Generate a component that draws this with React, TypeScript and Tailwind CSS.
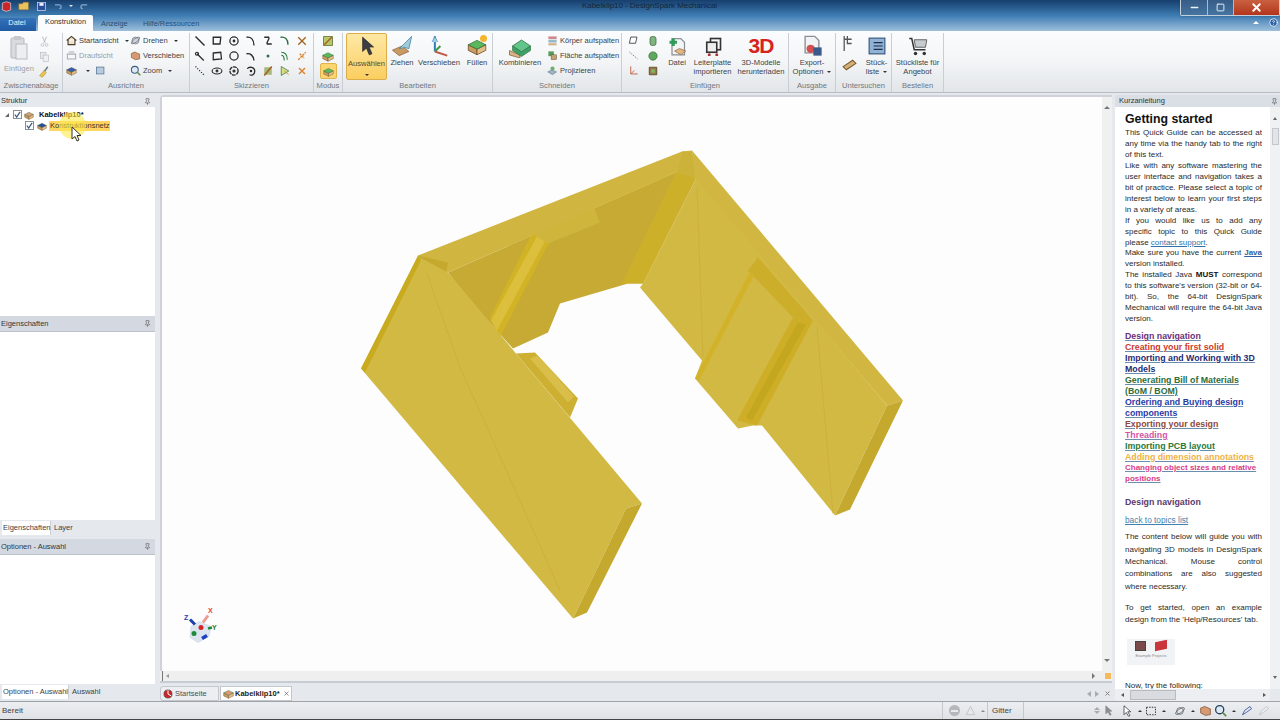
import React from "react";
import { Pin, X, Minus, Square, HelpCircle } from "lucide-react";

const Ico: React.FC<{ s?: number; h?: number; vb?: string; children: React.ReactNode }> = ({ s = 14, h, vb = "0 0 16 16", children }) => (
  <svg width={s} height={h ?? s} viewBox={vb} className="shrink-0" fill="none">
    {children}
  </svg>
);

const Caret = () => <span className="inline-block w-0 h-0 border-x-[2px] border-x-transparent border-t-[2px] border-t-[#333] ml-1 align-middle" />;

// tan box with a coloured lid, shows up a lot in the ribbon
const Box: React.FC<{ s?: number; lid?: string }> = ({ s = 14, lid = "#5cb85c" }) => (
  <Ico s={s}>
    <path d="M1 7l7 3.5V15L1 11.5z" fill="#c99a62" stroke="#6b4a25" strokeWidth=".6" />
    <path d="M15 7l-7 3.5V15l7-3.5z" fill="#e3bd85" stroke="#6b4a25" strokeWidth=".6" />
    <path d="M8 3.5L15 7l-7 3.5L1 7z" fill={lid} stroke="#2d6b32" strokeWidth=".6" />
  </Ico>
);

const K = "#2b2b2b";
const sketchIcons: React.ReactNode[] = [
  <path d="M2 2l12 12" stroke={K} strokeWidth="1.8" />,
  <path d="M3 3h10l-1 9H3z" stroke={K} strokeWidth="1.8" />,
  <g stroke={K} strokeWidth="1.7"><circle cx="8" cy="8" r="5.5" /><circle cx="8" cy="8" r="1" /></g>,
  <path d="M2 3c6-1 10 3 10 11" stroke={K} strokeWidth="1.8" />,
  <path d="M3 3h6c2 3-4 6-2 9h6" stroke={K} strokeWidth="1.8" />,
  <path d="M2 3c6-1 10 2 10 10" stroke="#2f6b3a" strokeWidth="1.8" />,
  <path d="M3 3l10 10M13 3L3 13" stroke="#a5621c" strokeWidth="1.8" />,
  <g stroke={K} strokeWidth="1.6"><path d="M4 5l9 9" /><circle cx="4" cy="5" r="2" /></g>,
  <path d="M3 4l10-1 1 9-11 1z" stroke={K} strokeWidth="1.7" />,
  <circle cx="8" cy="8" r="5.5" stroke={K} strokeWidth="1.7" />,
  <path d="M2 5c5-1 9 2 10 9" stroke={K} strokeWidth="1.8" />,
  <circle cx="8" cy="8" r="2" fill="#3a6b4a" />,
  <path d="M3 3c5 0 8 3 8 10M3 7c3 0 4 2 4 7" stroke="#2f7a40" strokeWidth="1.5" />,
  <path d="M3 13l10-10M5 5l6 6" stroke="#d9822b" strokeWidth="1.8" strokeDasharray="3 1" />,
  <path d="M2 2l12 12" stroke={K} strokeWidth="1.6" strokeDasharray="1.5 2" />,
  <g stroke={K} strokeWidth="1.5"><ellipse cx="8" cy="8" rx="6.5" ry="4" /><circle cx="8" cy="8" r="1.2" /></g>,
  <g stroke={K} strokeWidth="1.8"><circle cx="8" cy="8" r="5.5" strokeDasharray="5 1" /><circle cx="8" cy="8" r="1.2" /></g>,
  <g stroke={K} strokeWidth="1.7"><path d="M3 5c2-3 10-3 10 3s-5 6-7 5" /><circle cx="8" cy="8" r=".8" /></g>,
  <g><path d="M3 3h10v10H3z" fill="#8aa04a" opacity=".7" /><path d="M3 14L13 2" stroke="#a5621c" strokeWidth="2" /></g>,
  <g><path d="M3 2l10 6-10 6z" fill="#d5df8b" stroke="#3f7a3a" /><path d="M7 8l6 5" stroke="#c68a2b" /></g>,
  <path d="M4 4l8 8M12 4l-8 8" stroke="#d9822b" strokeWidth="1.8" />,
];

const GroupLabel: React.FC<{ children: React.ReactNode }> = ({ children }) => (
  <div className="h-[11px] text-center text-[7.6px] leading-[11px] text-[#71777e]">{children}</div>
);

const Group: React.FC<{ w: string; label: string; children: React.ReactNode }> = ({ w, label, children }) => (
  <div className={`${w} shrink-0 h-full flex flex-col border-r border-[#c9ced4] pb-[1px]`}>
    <div className="flex-1 min-h-0 flex">{children}</div>
    <GroupLabel>{label}</GroupLabel>
  </div>
);

const BigBtn: React.FC<{ w: string; icon: React.ReactNode; children: React.ReactNode }> = ({ w, icon, children }) => (
  <div className={`${w} shrink-0 flex flex-col items-center pt-[2px] text-center text-[7.6px] leading-[9px] text-[#3c4248]`}>
    <div className="h-[21px] flex items-center justify-center">{icon}</div>
    <div className="mt-[2px] whitespace-nowrap">{children}</div>
  </div>
);

const SmallRow: React.FC<{ icon: React.ReactNode; children?: React.ReactNode; grey?: boolean }> = ({ icon, children, grey }) => (
  <div className={`h-[15px] flex items-center gap-[2px] whitespace-nowrap text-[7.5px] ${grey ? "text-[#9a9ea3]" : "text-[#3c4248]"}`}>
    {icon}
    {children}
  </div>
);

const Ribbon = () => (
  <div className="h-[62px] flex bg-gradient-to-b from-[#fbfcfd] via-[#f3f5f7] to-[#e2e5e9] pt-[2px] border-b border-[#b8bdc4]">
    <Group w="w-[63px]" label="Zwischenablage">
      <div className="w-[38px] flex flex-col items-center pt-[2px] text-[7.6px] text-[#9ea2a6]">
        <Ico s={20} h={26} vb="0 0 20 26">
          <rect x="2" y="3" width="13" height="20" rx="1" fill="#d9dbde" stroke="#b5b8bc" />
          <rect x="7" y="9" width="11" height="15" fill="#eceef0" stroke="#b8bbbf" />
          <rect x="5" y="1" width="7" height="4" fill="#c5c8cc" />
        </Ico>
        <span className="mt-[2px]">Einfügen</span>
      </div>
      <div className="flex flex-col items-center pt-[1px]">
        <SmallRow icon={<Ico s={11}><path d="M5 1l4 9M11 1L7 10" stroke="#b3b6ba" strokeWidth="1.3" /><circle cx="5" cy="13" r="2" stroke="#b3b6ba" /><circle cx="11" cy="13" r="2" stroke="#b3b6ba" /></Ico>} />
        <SmallRow icon={<Ico s={11}><rect x="2" y="2" width="8" height="9" fill="#e6e8ea" stroke="#bcbfc3" /><rect x="6" y="6" width="8" height="9" fill="#eef0f1" stroke="#bcbfc3" /></Ico>} />
        <SmallRow icon={<Ico s={12}><path d="M13 1L8 8" stroke="#6d7a85" strokeWidth="2" /><path d="M8 6l3 3-5 6-4-2z" fill="#e9c64a" stroke="#9a7f22" strokeWidth=".6" /></Ico>} />
      </div>
    </Group>
    <Group w="w-[127px]" label="Ausrichten">
      <div className="w-[67px] pl-[3px]">
        <SmallRow icon={<Ico s={11}><path d="M1 8l7-6 7 6M3 7v7h10V7" stroke="#4a3a28" strokeWidth="1.6" fill="#efe5d0" /></Ico>}>
          <span className="text-[#34393f]">Startansicht</span><Caret />
        </SmallRow>
        <SmallRow grey icon={<Ico s={11}><path d="M2 13V6h12v7zM4 3h8" stroke="#a9adb2" strokeWidth="1.5" /></Ico>}>Draufsicht</SmallRow>
        <SmallRow icon={<span className="flex items-center gap-[5px]"><Box s={11} lid="#3f55b0" /><Caret /><Ico s={11}><rect x="2" y="3" width="11" height="10" fill="#b9cbe0" stroke="#4e6d8c" /></Ico></span>} />
      </div>
      <div>
        <SmallRow icon={<Ico s={11}><ellipse cx="8" cy="8" rx="5" ry="5" fill="#cfd4d8" stroke="#6a7177" /><ellipse cx="8" cy="8" rx="7.5" ry="2.5" stroke="#6a7177" transform="rotate(-35 8 8)" /></Ico>}>
          <span>Drehen</span><Caret />
        </SmallRow>
        <SmallRow icon={<Ico s={11}><path d="M2 5l5-2 7 3v7l-6 1-6-3z" fill="#d69a72" stroke="#8a5a3c" /></Ico>}>Verschieben</SmallRow>
        <SmallRow icon={<Ico s={11}><circle cx="7" cy="7" r="5" fill="#dce9f5" stroke="#3c5f7e" strokeWidth="1.5" /><path d="M11 11l4 4" stroke="#5a8a3a" strokeWidth="2" /></Ico>}>
          <span>Zoom</span><Caret />
        </SmallRow>
      </div>
    </Group>
    <Group w="w-[124px]" label="Skizzieren">
      <div className="pl-[1px] grid grid-cols-[repeat(7,17px)] grid-rows-[repeat(3,15px)] place-items-center">
        {sketchIcons.map((ic, i) => (
          <Ico key={i} s={12}>{ic}</Ico>
        ))}
      </div>
    </Group>
    <Group w="w-[29px]" label="Modus">
      <div className="w-full flex flex-col items-center">
        <div className="h-[15px] flex items-center"><Ico s={12}><path d="M2 2h12v12H2z" fill="#b8c76a" stroke="#5a6a2a" /><path d="M3 13L13 3" stroke="#a5621c" strokeWidth="2" /></Ico></div>
        <div className="h-[15px] flex items-center"><Box s={12} /></div>
        <div className="h-[16px] w-[17px] flex items-center justify-center rounded-[2px] bg-[#fcd56e] border border-[#e0b44c]"><Box s={11} /></div>
      </div>
    </Group>
    <Group w="w-[150px]" label="Bearbeiten">
      <div className="ml-[3px] w-[41px] h-[47px] shrink-0 flex flex-col items-center rounded-[2px] border border-[#dcae4a] bg-gradient-to-b from-[#fde8a4] to-[#fbce5e] text-[7.6px] text-[#5a4a28] pt-[2px]">
        <Ico s={18} h={20} vb="0 0 16 18"><path d="M4 1v13l3.5-3 2.5 6 2.5-1-2.5-6H14z" fill="#3c3c44" stroke="#222" strokeWidth=".5" /></Ico>
        <span className="mt-[2px]">Auswählen</span>
        <span className="mt-[5px] w-0 h-0 border-x-[2px] border-x-transparent border-t-[2px] border-t-[#333]" />
      </div>
      <BigBtn w="w-[30px]" icon={<Ico s={22}><path d="M1 11l7-3 5 4-7 3z" fill="#c99a62" stroke="#8a5a3c" strokeWidth=".5" /><path d="M6 10L15 1l-2 9-3-1z" fill="#9ecbd9" stroke="#4e8aa0" strokeWidth=".6" /></Ico>}>Ziehen</BigBtn>
      <BigBtn w="w-[44px]" icon={<Ico s={22}><path d="M5 1v11" stroke="#3a7fb8" strokeWidth="1.5" /><path d="M3 5l2-4 2 4" fill="#9ed0e8" stroke="#3a7fb8" strokeWidth=".5" /><path d="M5 12l4-4" stroke="#3f9a4a" strokeWidth="1.5" /><path d="M5 12l9 3" stroke="#c25a4a" strokeWidth="1.5" /></Ico>}>Verschieben</BigBtn>
      <BigBtn w="w-[32px]" icon={<span className="flex items-center"><Box s={20} /><span className="-ml-[7px] -mt-[14px] w-[7px] h-[7px] rounded-full bg-[#f5b52e]" /></span>}>Füllen</BigBtn>
    </Group>
    <Group w="w-[129px]" label="Schneiden">
      <BigBtn w="w-[54px]" icon={<Ico s={24}><path d="M1 11l7 3v2l-7-2z" fill="#d9b184" stroke="#6b4a25" strokeWidth=".4" /><path d="M3 8l6-4 6 4-6 4z" fill="#62c68a" stroke="#2d6b42" strokeWidth=".5" /><path d="M3 8v3l6 4 6-4V8l-6 4z" fill="#3fa265" stroke="#2d6b42" strokeWidth=".4" /></Ico>}>Kombinieren</BigBtn>
      <div>
        <SmallRow icon={<Ico s={11}><rect x="2" y="2" width="12" height="4" fill="#cf8b8b" /><rect x="2" y="7" width="12" height="4" fill="#9ab8c8" /><rect x="2" y="12" width="12" height="3" fill="#d4b184" /></Ico>}>Körper aufspalten</SmallRow>
        <SmallRow icon={<Ico s={11}><rect x="2" y="2" width="8" height="7" fill="#5a9a5a" /><rect x="6" y="7" width="8" height="7" fill="#c9a06a" stroke="#444" strokeWidth=".6" /></Ico>}>Fläche aufspalten</SmallRow>
        <SmallRow icon={<Ico s={11}><path d="M1 10l6-3 7 3-6 4z" fill="#9db4c8" stroke="#4a5a6a" strokeWidth=".6" /><circle cx="8" cy="5" r="3" fill="#6fae6f" /></Ico>}>Projizieren</SmallRow>
      </div>
    </Group>
    <Group w="w-[167px]" label="Einfügen">
      <div className="w-[21px] pl-[6px]">
        <SmallRow icon={<Ico s={11}><path d="M4 3h9l-2 9H2z" fill="#fff" stroke="#333" strokeWidth="1.2" /></Ico>} />
        <SmallRow icon={<Ico s={11}><path d="M2 3l12 10" stroke="#555" strokeDasharray="2 1.5" /></Ico>} />
        <SmallRow icon={<Ico s={11}><path d="M4 2v11h10M4 13l5-5" stroke="#c25a3a" strokeWidth="1.3" /></Ico>} />
      </div>
      <div className="w-[22px] pl-[4px]">
        <SmallRow icon={<Ico s={12}><rect x="4" y="2" width="8" height="12" rx="3" fill="#7fb37f" stroke="#3a6a3a" /></Ico>} />
        <SmallRow icon={<Ico s={12}><circle cx="8" cy="8" r="5.5" fill="#5da85d" stroke="#3a6a3a" /></Ico>} />
        <SmallRow icon={<Ico s={12}><path d="M3 3h10v10H3z" fill="#9a7a4a" stroke="#4a3a1a" /><circle cx="8" cy="8" r="2.5" fill="#7abf5a" /></Ico>} />
      </div>
      <BigBtn w="w-[24px]" icon={<Ico s={20}><path d="M4 2h7l3 3v10H4z" fill="#f3f4f5" stroke="#8c9094" /><path d="M2 5h6M5 2v6" stroke="#2f9a5a" strokeWidth="2.4" /><path d="M6 12l4-2 5 2-4 3z" fill="#e0b880" stroke="#8a5a3c" strokeWidth=".5" /></Ico>}>Datei</BigBtn>
      <BigBtn w="w-[47px]" icon={<Ico s={20}><rect x="6" y="2" width="8" height="9" stroke="#333" strokeWidth="1.3" /><rect x="3" y="5" width="8" height="8" fill="#eee" stroke="#333" strokeWidth="1.3" /><circle cx="5" cy="15" r="1.2" fill="#a33" /><circle cx="11" cy="15" r="1.2" fill="#a33" /></Ico>}>Leiterplatte<br />importieren</BigBtn>
      <BigBtn w="w-[50px]" icon={<span className="text-[21px] leading-none font-black tracking-[-1px] text-[#d8231c]">3D</span>}>3D-Modelle<br />herunterladen</BigBtn>
    </Group>
    <Group w="w-[47px]" label="Ausgabe">
      <BigBtn w="w-full" icon={<Ico s={22}><path d="M3 1h7l3 3v9H3z" fill="#f2f3f5" stroke="#8c9094" /><circle cx="7" cy="10" r="3" fill="#d25050" /><rect x="9" y="9" width="6" height="6" fill="#3a5a8a" /></Ico>}>Export-<br />Optionen<Caret /></BigBtn>
    </Group>
    <Group w="w-[56px]" label="Untersuchen">
      <div className="w-[27px] flex flex-col items-center pt-[2px] gap-[4px]">
        <Ico s={17}><path d="M3 1v14M6 1v7h4M3 4h7" stroke="#555" strokeWidth="1.2" /></Ico>
        <Ico s={17}><path d="M2 10l9-6 3 3-9 6z" fill="#d6b07a" stroke="#7a5a2a" /></Ico>
      </div>
      <BigBtn w="w-[27px]" icon={<Ico s={18}><rect x="1" y="1" width="14" height="14" fill="#8fb2d6" stroke="#35567a" /><path d="M5 5h8M5 8h8M5 11h8" stroke="#1c2f44" /></Ico>}>Stück-<br />liste<Caret /></BigBtn>
    </Group>
    <Group w="w-[52px]" label="Bestellen">
      <BigBtn w="w-full" icon={<Ico s={20}><path d="M1 2h2l2 9h9" stroke="#333" strokeWidth="1.2" /><path d="M5 3h10l-1 6H6z" fill="#c8ccd0" stroke="#555" strokeWidth=".7" /><circle cx="6" cy="14" r="1.4" fill="#333" /><circle cx="13" cy="14" r="1.4" fill="#333" /></Ico>}>Stückliste für<br />Angebot</BigBtn>
    </Group>
  </div>
);

const Header = () => (
  <div className="h-[31px] shrink-0 bg-gradient-to-b from-[#173f6d] via-[#3d7cb3] to-[#9dbfdb]">
    <div className="h-[15px] flex items-start">
      <div className="w-[582px] h-[12px] flex items-center gap-[6px] pl-[1px]">
        <Ico s={11}><path d="M2 3l6-2 6 2v10l-6 2-6-2z" fill="#c9252a" stroke="#fff" strokeWidth=".8" /></Ico>
        <Ico s={12}><path d="M1 5h5l1-2h7v10H1z" fill="#e9c25c" stroke="#8a6a22" strokeWidth=".6" /></Ico>
        <Ico s={11}><rect x="2" y="2" width="12" height="12" fill="#2b4f9a" stroke="#dce4f0" /><rect x="5" y="3" width="6" height="4" fill="#eef" /></Ico>
        <Ico s={10}><path d="M3 6h7c4 0 4 6 0 6" stroke="#7ea4d0" strokeWidth="2" /></Ico>
        <span className="w-0 h-0 border-x-[2px] border-x-transparent border-t-[2px] border-t-[#dde8f2]" />
        <Ico s={10}><path d="M13 6H6c-4 0-4 6 0 6" stroke="#88a9c9" strokeWidth="2" /></Ico>
      </div>
      <div className="w-[598px] pt-[1px] text-[7.9px] leading-[10px] text-[#14263c]">Kabelklip10 - DesignSpark Mechanical</div>
      <div className="flex w-[100px] h-[16px] rounded-b-[2px] border border-t-0 border-[#c4d0dc] shadow-sm">
        <div className="w-[27px] flex items-center justify-center bg-[#4d7197]/60 border-r border-[#a9bccd]"><Minus size={11} strokeWidth={3} color="#eef3f7" /></div>
        <div className="w-[26px] flex items-center justify-center bg-[#4d7197]/60 border-r border-[#a9bccd]"><Square size={9} strokeWidth={2.5} color="#eef3f7" /></div>
        <div className="flex-1 flex items-center justify-center bg-gradient-to-b from-[#c9603f] to-[#b3341c]"><X size={13} strokeWidth={3.5} color="#fff" /></div>
      </div>
    </div>
    <div className="h-[16px] flex items-end text-[7.4px]">
      <div className="w-[36px] h-[13px] pr-[2px] bg-gradient-to-b from-[#3572b8] to-[#1f5aa3] text-center leading-[10px] text-[#e8f0f8] rounded-t-[1px]">Datei</div>
      <div className="ml-[2px] w-[55px] h-[16px] rounded-t-[2px] bg-[#fbfcfd] text-center leading-[14px] text-[#2c3238]">Konstruktion</div>
      <div className="w-[50px] h-[13px] pl-[8px] leading-[11px] text-[#255077]">Anzeige</div>
      <div className="w-[1110px] h-[13px] leading-[11px] text-[#255077]">Hilfe/Ressourcen</div>
      <div className="flex-1 h-[13px] flex items-center gap-[10px] pb-[4px]">
        <span className="w-0 h-0 border-x-[3px] border-x-transparent border-b-[3px] border-b-white" />
        <HelpCircle size={9} color="#fff" fill="#2b5fa8" />
      </div>
    </div>
  </div>
);

const PanelHead: React.FC<{ title: string; light?: boolean }> = ({ title, light }) => (
  <div className={`flex items-center justify-between pl-[1px] pr-[4px] text-[7.5px] text-[#2f353b] ${light ? "h-[12px]" : "h-[16px] bg-[#d4d9e1] border-b border-[#bcc2cb]"}`}>
    <span>{title}</span>
    <Pin size={7} color="#555" />
  </div>
);

const Check = () => (
  <span className="w-[9px] h-[9px] shrink-0 border border-[#8a8f96] bg-white flex items-center justify-center">
    <svg width="7" height="7" viewBox="0 0 8 8"><path d="M1 4l2 3 4-6" stroke="#3a5a8a" strokeWidth="1.4" fill="none" /></svg>
  </span>
);

const SubTabs: React.FC<{ a: string; b: string; w: string }> = ({ a, b, w }) => (
  <div className="h-[15px] flex items-center text-[7.5px] text-[#3c4248] pl-[2px]">
    <span className={`${w} h-[14px] bg-white border-r border-[#c9ced4] leading-[14px] px-[1px] whitespace-nowrap`}>{a}</span>
    <span className="pl-[3px]">{b}</span>
  </div>
);

const LeftPanel = () => (
  <div className="relative w-[155px] shrink-0 flex flex-col">
    <PanelHead title="Struktur" light />
    <div className="h-[209px] bg-white pt-[2px] text-[7.5px] text-[#111]">
      <div className="h-[11px] flex items-center pl-[5px]">
        <span className="w-0 h-0 border-l-[4px] border-l-transparent border-b-[4px] border-b-[#666] mr-[4px]" />
        <Check />
        <span className="ml-[2px]"><Box s={10} lid="#d99a7a" /></span>
        <span className="ml-[5px] font-bold">Kabelklip10*</span>
      </div>
      <div className="h-[11px] flex items-center pl-[25px]">
        <Check />
        <span className="ml-[3px]"><Box s={10} lid="#2b4a9a" /></span>
        <span className="ml-[2px] px-[1px] w-[61px] bg-[#ffd662] leading-[10px] text-[#3a3524]">Konstruktionsnetz</span>
      </div>
    </div>
    <PanelHead title="Eigenschaften" />
    <div className="h-[188px] bg-white" />
    <SubTabs a="Eigenschaften" b="Layer" w="w-[49px]" />
    <div className="h-[4px]" />
    <PanelHead title="Optionen - Auswahl" />
    <div className="h-[129px] bg-white" />
    <SubTabs a="Optionen - Auswahl" b="Auswahl" w="w-[67px]" />
    {/* yellow highlight of the screen recorder + mouse pointer */}
    <div className="absolute left-[59px] top-[17px] w-[27px] h-[27px] rounded-full bg-[#ffe94a]/60" />
    <svg className="absolute left-[71px] top-[31px]" width="12" height="16" viewBox="0 0 12 16">
      <path d="M1 1v12l3-2.5 2 4.5 2-1-2-4.5h4z" fill="#fff" stroke="#333" />
    </svg>
  </div>
);

const Part = () => (
  <svg className="w-full h-full block" viewBox="162 97 940 573">
    {/* back wall */}
    <polygon points="448,272 680,170 696,178 643,283 628,283 560,303 548,332 513,348 470,300" fill="#c6aa33" />
    <polygon points="627,283 643,283 696,176 676,172 622,283" fill="#cdb02a" />
    <polygon points="532,233 550,240 500,337 490,317" fill="#d2b326" />
    <polygon points="537,236 546,239 497,330 491,320" fill="#dcbf3c" />
    <polygon points="530,232 593,205 600,222 548,243" fill="#d0b53c" />
    {/* top band */}
    <polygon points="418,255 682,151 692,150 696,176 676,172 448,272 420,262" fill="#d0b640" />
    <polygon points="418,255 448,262 446,272 420,262" fill="#c4a92e" />
    <polygon points="682,151 692,151 697,178 677,172" fill="#cdb23a" />
    {/* small tab on left wall */}
    <polygon points="516,353 535,352 578,398 570,417" fill="#cdb032" />
    <polygon points="530,358 538,355 574,396 568,402" fill="#d9bf4a" />
    {/* left wall */}
    <polygon points="418,256 361,368 573,618 626,508 642,503 448,272" fill="#d2b944" />
    <polygon points="418,255 361,368 365,372 421,260" fill="#c9ab1f" />
    <polygon points="642,503 626,508 573,618 587,612" fill="#c4a92e" />
    <path d="M427,273 L460,367 L493,440 L560,590" stroke="#c8ae38" strokeWidth=".7" fill="none" />
    {/* right wall */}
    <polygon points="692,150 903,400 887,405 696,180" fill="#d1b742" />
    <polygon points="696,178 887,405 835,515 762,425 753,425 738,428 695,378 702,360 640,287 643,283" fill="#d2b944" />
    <polygon points="903,400 887,405 835,515 850,509" fill="#c4a92e" />
    <polygon points="758,257 748,270 793,317 813,320" fill="#cdae2a" />
    <polygon points="750,271 695,378 699,380 754,275" fill="#d2b228" />
    <polygon points="793,317 813,320 757,425 737,420" fill="#cdae26" />
    <polygon points="798,322 806,324 752,420 746,417" fill="#c4a61f" />
    <path d="M697,187 L703,357 M817,327 L833,513" stroke="#c8ae38" strokeWidth=".7" fill="none" />
    {/* triad */}
    <g>
      <polygon points="199,621 211,626 209,636 198,642 190,637 191,626" fill="#dbe4ef" stroke="#c3cede" strokeWidth=".5" />
      <circle cx="201" cy="627" r="2.5" fill="#d8232a" />
      <circle cx="194" cy="633" r="2.5" fill="#1f8a3a" />
      <path d="M202,638 L207,635" stroke="#1f3fc0" strokeWidth="3.5" />
      <path d="M203,622 L208,615" stroke="#eb9c94" strokeWidth="3" />
      <path d="M190,619 L195,624" stroke="#1f3fa8" strokeWidth="3" />
      <path d="M208,628 L212,627" stroke="#1f8a3a" strokeWidth="2.5" />
      <text x="208" y="612" fontSize="7" fontWeight="700" fill="#e0443a" fontFamily="Liberation Sans">X</text>
      <text x="184" y="619" fontSize="7" fontWeight="700" fill="#2a3fb0" fontFamily="Liberation Sans">Z</text>
      <text x="212" y="629" fontSize="7" fontWeight="700" fill="#1f7a3a" fontFamily="Liberation Sans">Y</text>
    </g>
  </svg>
);

const Canvas = () => (
  <div className="flex-1 min-w-0 flex flex-col pl-[5px] pr-[3px]">
    <div className="flex-1 min-h-0 flex rounded-tl-[4px] border-l-2 border-t-2 border-[#cfd3d9] bg-white">
      <div className="flex-1 min-w-0 bg-[#fdfdfe]"><Part /></div>
      <div className="w-[10px] bg-[#eff0f0] flex flex-col items-center justify-between py-[9px] text-[#888]">
        <span className="w-0 h-0 border-x-[3px] border-x-transparent border-b-[3px] border-b-[#777]" />
        <span className="w-0 h-0 border-x-[3px] border-x-transparent border-t-[3px] border-t-[#777]" />
      </div>
    </div>
    <div className="h-[12px] flex items-center justify-between bg-[#eeefee] border-b-2 border-[#c7ccd2] pl-[2px] pr-[1px]">
      <span className="flex items-center gap-[3px]">
        <span className="w-[1px] h-[10px] bg-[#777]" />
        <span className="w-0 h-0 border-y-[2px] border-y-transparent border-r-[3px] border-r-[#999]" />
      </span>
      <span className="flex items-center gap-[10px]">
        <span className="w-0 h-0 border-y-[3px] border-y-transparent border-l-[3px] border-l-[#777]" />
        <span className="w-[6px] h-[6px] bg-[#f7b95a]" />
      </span>
    </div>
    <div className="h-[3px]" />
    <div className="h-[15px] flex items-stretch text-[7.5px]">
      <div className="w-[59px] flex items-center gap-[2px] pl-[2px] bg-[#eceef1] border border-[#c3c8cf] rounded-l-[3px] text-[#4a5057]">
        <Ico s={10}><circle cx="8" cy="8" r="6.5" fill="#c9252a" stroke="#444" /><path d="M8 2v6l5 3" stroke="#fff" strokeWidth="1.6" /></Ico>
        Startseite
      </div>
      <div className="ml-[1px] w-[72px] flex items-center gap-[1px] pl-[2px] bg-white border border-[#c3c8cf] text-[#222] font-bold">
        <Box s={11} lid="#d99a7a" />
        <span>Kabelklip10*</span>
        <X size={7} className="ml-[2px]" color="#444" />
      </div>
      <div className="flex-1 flex items-center justify-end gap-[4px] pr-[1px]">
        <span className="w-0 h-0 border-y-[3px] border-y-transparent border-r-[4px] border-r-[#a9adb2]" />
        <span className="w-0 h-0 border-y-[3px] border-y-transparent border-l-[4px] border-l-[#a9adb2]" />
        <X size={7} color="#777" strokeWidth={3} className="ml-[1px]" />
      </div>
    </div>
  </div>
);

const just = "text-justify [text-align-last:justify]";
const intro: [string, boolean][] = [
  ["This Quick Guide can be accessed at", true],
  ["any time via the handy tab to the right", true],
  ["of this text.", false],
  ["Like with any software mastering the", true],
  ["user interface and navigation takes a", true],
  ["bit of practice. Please select a topic of", true],
  ["interest below to learn your first steps", true],
  ["in a variety of areas.", false],
  ["If you would like us to add any", true],
  ["specific topic to this Quick Guide", true],
];

const links: [string, string][] = [
  ["Design navigation", "text-[#6a2f7c]"],
  ["Creating your first solid", "text-[#cc3b2c]"],
  ["Importing and Working with 3D", "text-[#1f2c74]"],
  ["Models", "text-[#1f2c74]"],
  ["Generating Bill of Materials", "text-[#2f6d3a]"],
  ["(BoM / BOM)", "text-[#2f6d3a]"],
  ["Ordering and Buying design", "text-[#2a3ca6]"],
  ["components", "text-[#2a3ca6]"],
  ["Exporting your design", "text-[#8d4a40]"],
  ["Threading", "text-[#d455a5]"],
  ["Importing PCB layout", "text-[#2a7a3a]"],
  ["Adding dimension annotations", "text-[#efb244]"],
  ["Changing object sizes and relative", "text-[#d93b8a] text-[8px]"],
  ["positions", "text-[#d93b8a] text-[8px]"],
];

const Guide = () => (
  <div className="w-[165px] shrink-0 flex flex-col">
    <div className="h-[12px] flex items-center justify-between pl-[4px] pr-[2px] text-[7.5px] text-[#2f353b] bg-[#dadee5]">
      <span>Kurzanleitung</span>
      <Pin size={7} color="#555" />
    </div>
    <div className="flex-1 min-h-0 flex">
      <div className="w-[155px] shrink-0 bg-white pl-[10px] pr-[8px] pt-[4px] overflow-hidden text-[8px] leading-[10.95px] text-[#2a2a2a]">
        <div className="text-[12.3px] leading-[16px] font-bold text-[#111] mb-[1px]">Getting started</div>
        {intro.map(([t, j]) => (
          <div key={t} className={j ? just : ""}>{t}</div>
        ))}
        <div>please <span className="text-[#2f73a8] underline">contact support</span>.</div>
        <div className={just}>Make sure you have the current <span className="text-[#2f5fa8] underline font-bold">Java</span></div>
        <div>version installed.</div>
        <div className={just}>The installed Java <b className="text-[#111]">MUST</b> correspond</div>
        <div className={just}>to this software's version (32-bit or 64-</div>
        <div className={just}>bit). So, the 64-bit DesignSpark</div>
        <div className={just}>Mechanical will require the 64-bit Java</div>
        <div>version.</div>
        <div className="mt-[6px] text-[8.8px] font-bold underline decoration-[#6a8fae] whitespace-nowrap">
          {links.map(([t, c]) => (
            <div key={t} className={c}>{t}</div>
          ))}
        </div>
        <div className="mt-[12px] text-[8.8px] font-bold text-[#5a3a70]">Design navigation</div>
        <div className="mt-[8px] text-[8.3px] text-[#3f82ad] underline">back to topics list</div>
        <div className="mt-[5px] leading-[12.3px]">
          <div className={just}>The content below will guide you with</div>
          <div className={just}>navigating 3D models in DesignSpark</div>
          <div className={just}>Mechanical. Mouse control</div>
          <div className={just}>combinations are also suggested</div>
          <div>where necessary.</div>
        </div>
        <div className="mt-[9px] leading-[12.3px]">
          <div className={just}>To get started, open an example</div>
          <div>design from the 'Help/Resources' tab.</div>
        </div>
        <div className="mt-[13px] ml-[2px] w-[48px] h-[26px] bg-[#f2f3f5] flex flex-col items-center pt-[2px]">
          <div className="flex gap-[9px]">
            <span className="w-[11px] h-[10px] bg-[#7a4a4a] border border-[#444]" />
            <span className="w-[12px] h-[9px] bg-[#c9353a] -skew-y-12" />
          </div>
          <div className="mt-[2px] text-[4px] leading-[5px] text-[#888]">Example Projects</div>
        </div>
        <div className="mt-[16px]">Now, try the following:</div>
      </div>
      <div className="flex-1 flex flex-col items-center bg-[#f0f1f2] py-[10px] justify-between">
        <span className="w-0 h-0 border-x-[2px] border-x-transparent border-b-[3px] border-b-[#666]" />
        <span className="w-[7px] h-[17px] mb-auto mt-[8px] bg-[#e2e4e8] border border-[#c4c7cc]" />
        <span className="w-0 h-0 border-x-[2px] border-x-transparent border-t-[3px] border-t-[#666]" />
      </div>
    </div>
    <div className="h-[12px] flex items-center bg-[#eceef1] w-[155px] pl-[6px] pr-[4px] justify-between">
      <span className="flex items-center gap-[6px]">
        <span className="w-0 h-0 border-y-[2px] border-y-transparent border-r-[3px] border-r-[#555]" />
        <span className="w-[46px] h-[10px] bg-[#d8dbe0] border border-[#bbb]" />
      </span>
      <span className="w-0 h-0 border-y-[2px] border-y-transparent border-l-[3px] border-l-[#555]" />
    </div>
  </div>
);

const UpCaret: React.FC<{ cls: string }> = ({ cls }) => (
  <span className={`${cls} shrink-0 w-0 h-0 border-x-[2px] border-x-transparent border-b-[2px] border-b-[#333]`} />
);

const Status = () => (
  <div className="h-[19px] shrink-0 flex items-center bg-gradient-to-b from-[#eceef1] to-[#dfe2e6] border-t border-[#9ea3aa] border-b border-b-[#444] text-[8px] text-[#3c4248]">
    <span className="pl-[2px] w-[942px]">Bereit</span>
    <div className="w-[45px] h-full flex items-center gap-[5px] pl-[6px] border-l border-[#c4c8ce]">
      <span className="w-[11px] h-[11px] rounded-full bg-[#b4b8bc] flex items-center justify-center"><span className="w-[7px] h-[2px] bg-[#e8eaec]" /></span>
      <Ico s={11}><path d="M8 2l6 12H2z" fill="#e6e8ea" stroke="#b4b8bc" /></Ico>
      <span className="w-0 h-0 border-x-[2px] border-x-transparent border-b-[2px] border-b-[#888]" />
    </div>
    <div className="w-[37px] h-full flex items-center pl-[4px] border-l border-r border-[#c4c8ce]">Gitter</div>
    <div className="flex-1 flex items-center pl-[70px]">
      <span className="flex flex-col gap-[1px] shrink-0">
        <span className="w-0 h-0 border-x-[3px] border-x-transparent border-b-[3px] border-b-[#aaa]" />
        <span className="w-0 h-0 border-x-[3px] border-x-transparent border-t-[3px] border-t-[#aaa]" />
      </span>
      <span className="ml-[3px]"><Ico s={11}><path d="M4 1v12l3-3 3 5 2-1-3-5h4z" fill="#8c9096" stroke="#666" strokeWidth=".5" /></Ico></span>
      <span className="ml-[7px]"><Ico s={12}><path d="M4 1v12l3-3 3 5 2-1-3-5h4z" fill="#fff" stroke="#333" /></Ico></span>
      <UpCaret cls="ml-[5px]" />
      <span className="ml-[3px]"><Ico s={12}><rect x="2" y="3" width="12" height="10" stroke="#333" strokeDasharray="2 1.5" strokeWidth="1.3" /></Ico></span>
      <UpCaret cls="ml-[5px]" />
      <span className="ml-[8px]"><Ico s={12}><ellipse cx="8" cy="8" rx="4.5" ry="4.5" stroke="#5a6167" /><ellipse cx="8" cy="8" rx="7" ry="2.5" stroke="#5a6167" transform="rotate(-35 8 8)" /></Ico></span>
      <UpCaret cls="ml-[5px]" />
      <span className="ml-[4px]"><Ico s={13}><path d="M2 5l5-2 7 3v7l-6 1-6-3z" fill="#d69a72" stroke="#8a5a3c" /></Ico></span>
      <span className="ml-[2px]"><Ico s={13}><circle cx="7" cy="7" r="5" fill="#dce9f5" stroke="#24405a" strokeWidth="1.6" /><path d="M11 11l4 4" stroke="#5a8a3a" strokeWidth="2" /></Ico></span>
      <UpCaret cls="ml-[5px]" />
      <span className="ml-[5px]"><Ico s={12}><path d="M2 13l3-6 7-5 2 3-7 5z" fill="#dfe6ef" stroke="#2b3f8a" /></Ico></span>
      <span className="ml-[5px]"><Ico s={12}><path d="M2 13l3-6 7-5 2 3-7 5z" fill="#eceef0" stroke="#b9bdc1" /></Ico></span>
    </div>
  </div>
);

export default function App() {
  return (
    <div className="w-[1280px] h-[720px] overflow-hidden flex flex-col bg-[#e5e8ec] [font-family:'Liberation_Sans',Arial,sans-serif]">
      <Header />
      <Ribbon />
      <div className="h-[2px] shrink-0" />
      <div className="flex-1 min-h-0 flex">
        <LeftPanel />
        <Canvas />
        <Guide />
      </div>
      <Status />
    </div>
  );
}
